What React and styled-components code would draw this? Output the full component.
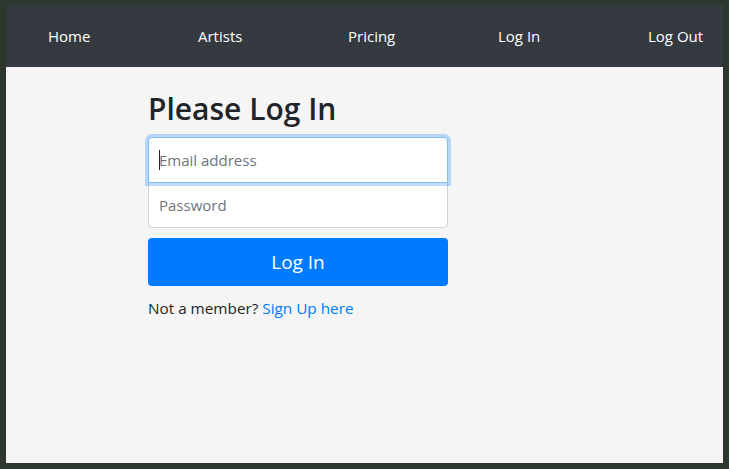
import React from "react";
import styled, { createGlobalStyle } from "styled-components";

const GlobalStyle = createGlobalStyle`
  html, body {
    margin: 0;
    padding: 0;
    background: #2e372d;
  }
  body {
    font-family: "Open Sans", "Noto Sans", sans-serif;
    color: #212529;
  }
  * {
    box-sizing: border-box;
  }
`;

const Frame = styled.div`
  height: 469px;
  padding: 5px 6px 6px 6px;
  display: flex;
`;

const Window = styled.div`
  flex: 1;
  min-width: 0;
  overflow: hidden;
  display: flex;
  flex-direction: column;
  background: #f5f5f5;
`;

const NavBar = styled.nav`
  height: 62px;
  flex-shrink: 0;
  background: #343a40;
  display: flex;
  align-items: center;
  padding-left: 42px;
`;

const NavLink = styled.a`
  width: 150px;
  flex-shrink: 0;
  color: #fff;
  font-size: 15px;
  text-decoration: none;
  white-space: nowrap;

  &:last-child {
    width: auto;
  }
`;

const Main = styled.main`
  flex: 1;
  padding: 22px 0 0 142px;
`;

const Form = styled.form`
  width: 300px;
  display: flex;
  flex-direction: column;
`;

const Heading = styled.h1`
  margin: 0 0 8px;
  font-size: 30px;
  font-weight: 600;
  line-height: 40px;
  color: #212529;
`;

const Field = styled.div`
  position: relative;
  z-index: ${(p) => (p.$focused ? 2 : 1)};
  margin-top: ${(p) => (p.$first ? "0" : "-1px")};
`;

const Input = styled.input`
  display: block;
  width: 100%;
  height: 46px;
  padding: 10px;
  font-family: inherit;
  font-size: 15px;
  color: #495057;
  background: #fff;
  border: 1px solid ${(p) => (p.$focused ? "#80bdff" : "#ced4da")};
  border-radius: ${(p) => (p.$first ? "4px 4px 0 0" : "0 0 4px 4px")};
  box-shadow: ${(p) =>
    p.$focused ? "0 0 0 3px rgba(0, 123, 255, 0.25)" : "none"};
  outline: none;
  caret-color: transparent;

  &::placeholder {
    color: #6c757d;
  }
`;

const Caret = styled.span`
  position: absolute;
  left: 11px;
  top: 13px;
  width: 1px;
  height: 20px;
  background: #212529;
  pointer-events: none;
`;

const Button = styled.button`
  margin-top: 10px;
  height: 48px;
  border: none;
  border-radius: 4px;
  background: #007bff;
  color: #fff;
  font-family: inherit;
  font-size: 19px;
  cursor: pointer;
`;

const Note = styled.p`
  margin: 11px 0 0;
  font-size: 15.3px;
  line-height: 22px;
  color: #212529;

  a {
    color: #007bff;
    text-decoration: none;
  }
`;

const links = ["Home", "Artists", "Pricing", "Log In", "Log Out"];

const App = () => {
  return (
    <>
      <GlobalStyle />
      <Frame>
        <Window>
          <NavBar>
            {links.map((item) => (
              <NavLink key={item} href="#">
                {item}
              </NavLink>
            ))}
          </NavBar>
          <Main>
            <Form onSubmit={(e) => e.preventDefault()}>
              <Heading>Please Log In</Heading>
              <Field $first $focused>
                <Input
                  $first
                  $focused
                  type="email"
                  placeholder="Email address"
                />
                <Caret />
              </Field>
              <Field>
                <Input type="password" placeholder="Password" />
              </Field>
              <Button type="submit">Log In</Button>
              <Note>
                Not a member? <a href="#">Sign Up here</a>
              </Note>
            </Form>
          </Main>
        </Window>
      </Frame>
    </>
  );
};

export default App;
